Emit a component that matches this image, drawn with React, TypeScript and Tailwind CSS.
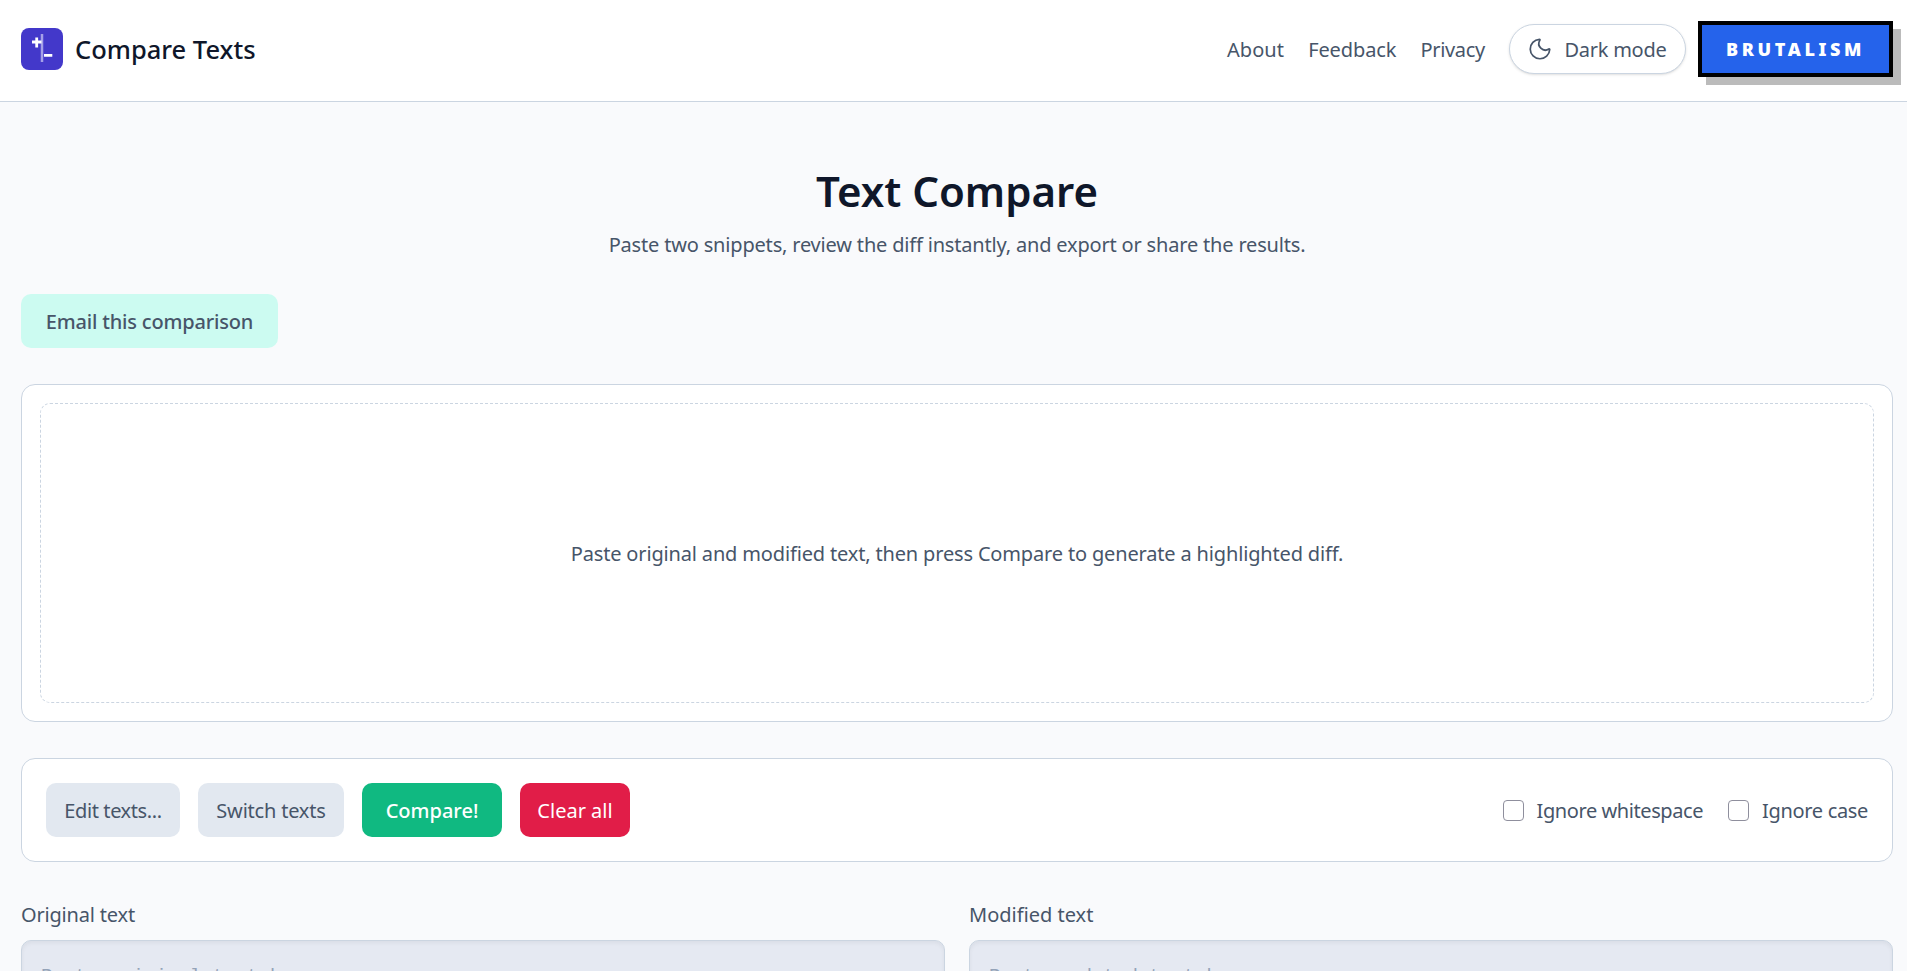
import { Moon } from "lucide-react";

const font = { fontFamily: '"Noto Sans", sans-serif' };
const mono = { fontFamily: '"Liberation Mono", monospace' };

export default function App() {
  return (
    <div style={font} className="h-screen overflow-hidden bg-[#f9fafc] text-[#475569] text-[20px] leading-[28px]">
      <header className="h-[102px] bg-white border-b border-[#cbd5e1] pl-[21px] pr-[14px] pb-[3px] flex items-center justify-between">
        <div className="flex items-center gap-3">
          <div className="w-[42px] h-[42px] rounded-lg bg-[#4338ca] flex items-center justify-center">
            <svg width="42" height="42" viewBox="0 0 42 42" fill="none">
              <path d="M21 6V34" stroke="#a5a0e8" strokeWidth="2.5" />
              <path d="M11 14H20.5M15.7 9.5V19.5M23 27.3H31.3" stroke="white" strokeWidth="2.8" />
            </svg>
          </div>
          <span className="text-[25.5px] font-medium text-[#0f172a]">Compare Texts</span>
        </div>
        <div className="flex items-center">
          <nav className="flex gap-6 mr-6 pt-[2px]">
            <a className="tracking-[0.1px]">About</a>
            <a className="tracking-[-0.1px]">Feedback</a>
            <a className="tracking-[-0.3px]">Privacy</a>
          </nav>
          <button className="h-[50px] w-[177px] rounded-full bg-white border border-[#cbd5e1] shadow-sm flex items-center justify-center gap-[11px] pr-[1px]">
            <Moon size={26} strokeWidth={1.6} />
            <span className="tracking-[-0.25px] pt-[2px]">Dark mode</span>
          </button>
          <button className="ml-3 w-[195px] h-[56px] bg-[#2563eb] border-4 border-black shadow-[8px_8px_0_#bbbbbb] text-white text-[18px] font-black tracking-[0.2em]">
            BRUTALISM
          </button>
        </div>
      </header>
      <main className="pl-[21px] pr-[14px]">
        <h1 className="mt-[63px] text-center text-[42px] leading-[52px] font-semibold text-[#0f172a]">Text Compare</h1>
        <p className="mt-[14px] text-center tracking-[-0.18px]">Paste two snippets, review the diff instantly, and export or share the results.</p>
        <button className="mt-[35px] block w-[257px] h-[54px] pt-[2px] rounded-[10px] bg-[#ccfbf1] font-medium tracking-[-0.18px]">Email this comparison</button>
        <section className="mt-[36px] h-[338px] rounded-[14px] bg-white border border-[#cbd5e1] p-[18px]">
          <div className="h-full pt-[2px] rounded-[10px] border border-dashed border-[#cbd5e1] flex items-center justify-center tracking-[-0.16px]">
            Paste original and modified text, then press Compare to generate a highlighted diff.
          </div>
        </section>
        <section className="mt-[36px] h-[104px] rounded-[14px] bg-white border border-[#cbd5e1] px-[24px] flex items-center justify-between">
          <div className="flex gap-[18px]">
            <button className="w-[134px] h-[54px] pt-[2px] rounded-[10px] bg-[#e2e8f0] tracking-[-0.4px]">Edit texts...</button>
            <button className="w-[146px] h-[54px] pt-[2px] rounded-[10px] bg-[#e2e8f0] tracking-[-0.2px]">Switch texts</button>
            <button className="w-[140px] h-[54px] pt-[2px] rounded-[10px] bg-[#10b981] text-white font-medium">Compare!</button>
            <button className="w-[110px] h-[54px] pt-[2px] rounded-[10px] bg-[#e11d48] text-white">Clear all</button>
          </div>
          <div className="flex items-center gap-[25px]">
            <label className="flex items-center gap-[13px]">
              <span className="w-[21px] h-[21px] rounded-[4px] bg-white border border-[#8f8f9d]" />
              <span className="pt-[2px] tracking-[-0.42px]">Ignore whitespace</span>
            </label>
            <label className="flex items-center gap-[13px]">
              <span className="w-[21px] h-[21px] rounded-[4px] bg-white border border-[#8f8f9d]" />
              <span className="pt-[2px] tracking-[-0.33px]">Ignore case</span>
            </label>
          </div>
        </section>
        <div className="mt-[36px] grid grid-cols-2 gap-6">
          <div>
            <div className="h-[28px] leading-[34px] tracking-[-0.18px]">Original text</div>
            <div style={mono} className="mt-[14px] h-[200px] rounded-[10px] bg-[#e5e9f2] border border-[#cbd5e1] shadow-inner px-[19px] pt-[21px] text-[19.08px] text-[#94a3b8]">Paste original text here...</div>
          </div>
          <div>
            <div className="h-[28px] leading-[34px]">Modified text</div>
            <div style={mono} className="mt-[14px] h-[200px] rounded-[10px] bg-[#e5e9f2] border border-[#cbd5e1] shadow-inner px-[19px] pt-[21px] text-[19.08px] text-[#94a3b8]">Paste updated text here...</div>
          </div>
        </div>
      </main>
    </div>
  );
}
